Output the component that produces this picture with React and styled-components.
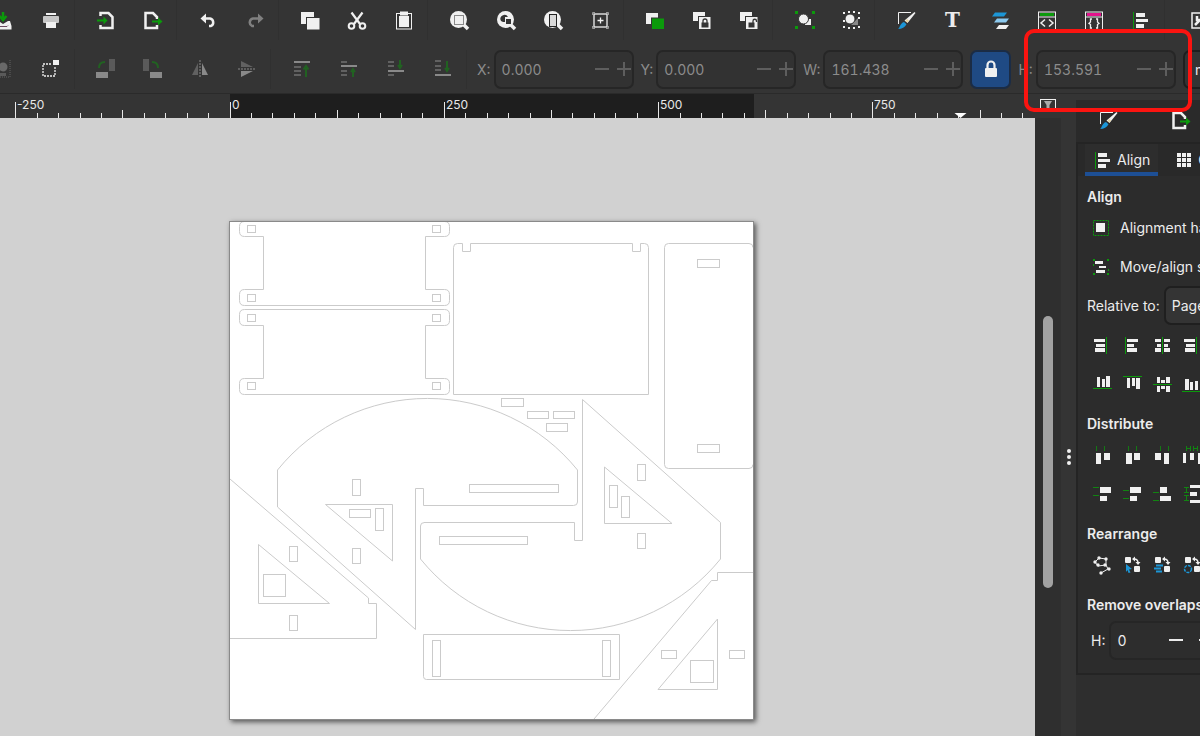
import React, { useState } from "react";
import styled, { createGlobalStyle } from "styled-components";

const W = "#f0f0f0";
const G = "#0b9a0b";
const B = "#1c96d6";
const D = "#343434";

const zoomGlass = (
  <>
    <circle cx="9.5" cy="9.5" r="8.5" fill={W} />
    <path d="M15 15l4 4" stroke={W} strokeWidth="3.5" />
  </>
);

const swapBase = (
  <>
    <rect x="3" y="2" width="6" height="6" rx="1" fill={W} />
    <rect x="12" y="11" width="6" height="6" rx="1" fill={W} />
    <path d="M12 4q4 0 4 4" stroke={W} strokeWidth="1.5" fill="none" />
    <path d="M13 1.5v5L10 4zM13.5 7h5L16 10z" fill={W} />
  </>
);

const bars = (list, fill = W) =>
  list.map(([x, y, width, height], i) => (
    <rect key={i} x={x} y={y} width={width} height={height} fill={fill} />
  ));

const ART = {
  save: (
    <>
      <path d="M9 2v6M5.5 6l3.5 4 3.5-4" stroke={G} strokeWidth="2.5" fill="none" />
      <path d="M2 12h4l3 2 5-3h2l1.5 5v3.5H0V15z" fill={W} />
      <path d="M4 16.5h9l1-1" stroke="#6b4a60" fill="none" />
    </>
  ),
  print: (
    <>
      <rect x="5" y="3" width="10" height="2" fill={W} />
      <rect x="2" y="6" width="16" height="7" rx="1" fill="#c6c6c6" />
      <rect x="5" y="12" width="10" height="6" fill={W} />
    </>
  ),
  importFile: (
    <>
      <path d="M4.5 6V3h8l4 4v11h-12v-3" stroke={W} strokeWidth="2.5" fill="none" />
      <path d="M1 10.5h8" stroke={G} strokeWidth="2" />
      <path d="M7.5 6.5l4 4-4 4z" fill={G} />
    </>
  ),
  exportFile: (
    <>
      <path d="M14 15v3H2.5V3h7.5l4 4v2" stroke={W} strokeWidth="2.5" fill="none" />
      <path d="M9 11.5h7" stroke={G} strokeWidth="2" />
      <path d="M15 7.5l4.5 4-4.5 4z" fill={G} />
    </>
  ),
  undo: (
    <>
      <path d="M6 8.5h6a4 4 0 0 1 1 7.5h-2" stroke={W} strokeWidth="2.5" fill="none" />
      <path d="M2.5 8.5L8 3.5v10z" fill={W} />
    </>
  ),
  redo: (
    <>
      <path d="M14 8.5H8a4 4 0 0 0-1 7.5h2" stroke="#808080" strokeWidth="2.5" fill="none" />
      <path d="M18.5 8.5L13 3.5v10z" fill="#808080" />
    </>
  ),
  copy: (
    <>
      <rect x="1" y="2" width="13" height="12" fill={W} />
      <rect x="6.5" y="7.5" width="13.5" height="12.5" fill={W} stroke={D} />
    </>
  ),
  cut: (
    <>
      <path d="M4.5 2.5L13 14M15.5 2.5L7 14" stroke={W} strokeWidth="2.2" />
      <circle cx="4.5" cy="16" r="2.8" fill="none" stroke={W} strokeWidth="2" />
      <circle cx="15.5" cy="16" r="2.8" fill="none" stroke={W} strokeWidth="2" />
    </>
  ),
  paste: (
    <>
      <rect x="2.5" y="3.5" width="15" height="15.5" fill="none" stroke={W} />
      <rect x="5" y="6" width="10" height="11" fill={W} />
      <rect x="6" y="1.5" width="8" height="4" fill={W} />
    </>
  ),
  zoomSelection: (
    <>
      {zoomGlass}
      <rect x="5.5" y="5.5" width="9" height="9" fill="none" stroke="#222" strokeDasharray="1 1" />
    </>
  ),
  zoomDrawing: (
    <>
      {zoomGlass}
      <path d="M5 11a4 4 0 1 1 7-4H9v5H7z" fill={D} />
      <rect x="9.5" y="8.5" width="6" height="6" fill={D} stroke={W} />
    </>
  ),
  zoomPage: (
    <>
      {zoomGlass}
      <rect x="6.5" y="4.5" width="7" height="12" fill="#d8d8d8" stroke="#222" />
    </>
  ),
  zoomCenter: (
    <>
      <rect x="4" y="4" width="13" height="13" fill="none" stroke={W} strokeWidth="1.3" />
      <path d="M7.5 10.5h6M10.5 7.5v6" stroke={W} strokeWidth="1.3" />
      <path d="M2.5 5V2.5H5M16 2.5h2.5V5M2.5 16v2.5H5M16 18.5h2.5V16" stroke="#999" fill="none" />
    </>
  ),
  duplicate: (
    <>
      <rect x="1" y="3" width="12" height="11" fill={W} />
      <rect x="6.5" y="8" width="13" height="11.5" fill={G} stroke={D} />
    </>
  ),
  clone: (
    <>
      <rect x="1" y="2" width="12" height="9" fill={W} />
      <rect x="6.5" y="6.5" width="12.5" height="13" fill={W} stroke={D} />
      <rect x="9.5" y="12.5" width="7" height="5" fill={D} />
      <path d="M11 13v-2a2 2 0 0 1 4 0v2" stroke={D} strokeWidth="1.3" fill="none" />
    </>
  ),
  unlink: (
    <>
      <rect x="1" y="2" width="12" height="9" fill={W} />
      <rect x="6.5" y="6.5" width="12.5" height="13" fill={W} stroke={D} />
      <rect x="9.5" y="12.5" width="6" height="5" fill={D} />
      <path d="M14 13v-2a1.5 1.5 0 0 1 3.5 0v1" stroke={D} strokeWidth="1.3" fill="none" />
    </>
  ),
  group: (
    <>
      {bars([[1, 1, 3, 3], [18, 1, 3, 3], [1, 16, 3, 3], [18, 16, 3, 3]], G)}
      <rect x="11" y="9" width="6" height="6" fill={W} />
      <circle cx="9.5" cy="9" r="5" fill={W} stroke={D} />
    </>
  ),
  ungroup: (
    <>
      <path d="M10 15h7V8z" fill="#888" />
      <circle cx="9" cy="9" r="5" fill={W} stroke={D} />
      {bars([[2, 2, 2, 2], [7, 1, 2, 2], [12, 1, 2, 2], [17, 2, 2, 2], [2, 16, 2, 2], [7, 17, 2, 2], [12, 17, 2, 2], [17, 16, 2, 2], [2, 10, 2, 2], [17, 7, 2, 2]])}
    </>
  ),
  pen: (
    <>
      <path d="M2.5 14V2.5H15" stroke={W} fill="none" />
      <path d="M18.5 2l1 1-8 10-3-2.5z" fill={W} />
      <path d="M11 9l2 1.5-1.5 2-2-1.5z" fill="#e9d7a0" />
      <path d="M8 12l2.5 2.2C9 17 6 19 2 19c2-1 2-6 6-7z" fill={B} />
    </>
  ),
  layers: (
    <>
      <path d="M5 2.5h12l-3 4H2z" fill={B} />
      <path d="M7 8.5h12l-3 4H4z" fill="#8cc9ee" />
      <path d="M9 15h10l-3 4H6z" fill={W} />
    </>
  ),
  xml: (
    <>
      <rect x="1.5" y="2" width="17" height="18" fill="none" stroke={W} />
      <rect x="3" y="3" width="14" height="3" fill={G} />
      <path d="M2 7h16" stroke={W} />
      <path d="M8 9.5l-4 3.5 4 3.5M12 9.5l4 3.5-4 3.5" stroke={W} strokeWidth="1.5" fill="none" />
    </>
  ),
  css: (
    <>
      <rect x="1.5" y="2" width="17" height="18" fill="none" stroke={W} />
      <rect x="3" y="3" width="14" height="3" fill="#e3128c" />
      <path d="M2 7h16" stroke={W} />
      <path d="M8 9H6.5v3L5 13.5l1.5 1V18H8M12 9h1.5v3l1.5 1.5-1.5 1V18H12" stroke={W} strokeWidth="1.3" fill="none" />
    </>
  ),
  align: (
    <>
      <path d="M2.5 2v17" stroke={G} />
      {bars([[5, 3, 9, 4], [5, 9, 12, 3], [5, 14, 8, 4]])}
    </>
  ),
  prefs: (
    <>
      <rect x="6" y="3" width="15" height="15" fill="none" stroke={W} strokeWidth="1.5" />
      <path d="M9 15l5-5M11 6v4h4" stroke={W} strokeWidth="2.5" fill="none" />
    </>
  ),
  select: (
    <>
      <circle cx="9" cy="8" r="4.5" fill="#aaa" />
      <path d="M3 1v17h13V1" stroke="#999" strokeDasharray="1 1" fill="none" />
      <path d="M5 14h7v3H5z" fill="#888" />
    </>
  ),
  scaleBox: (
    <>
      <rect x="2" y="5" width="12" height="12" fill="none" stroke={W} strokeWidth="1.3" strokeDasharray="2 1" />
      <rect x="11" y="0" width="8" height="7" fill={D} />
      <rect x="12" y="1" width="6" height="5" fill={W} />
    </>
  ),
  rotateLeft: (
    <>
      <rect x="13" y="0" width="6" height="12" fill="#888" />
      <rect x="0" y="13" width="12" height="6" fill={W} />
      <path d="M3 9q0-6 6-6" stroke={G} strokeWidth="2" fill="none" />
    </>
  ),
  rotateRight: (
    <>
      <rect x="0" y="0" width="6" height="12" fill="#888" />
      <rect x="7" y="13" width="12" height="6" fill={W} />
      <path d="M9 3q6 0 6 6" stroke={G} strokeWidth="2" fill="none" />
    </>
  ),
  flipH: (
    <>
      <path d="M8 4v12H2z" fill="#999" />
      <path d="M12 4v12h6z" fill={W} />
      <path d="M10 1v18" stroke={W} strokeDasharray="2 1" />
    </>
  ),
  flipV: (
    <>
      <path d="M4 8h12L4 2z" fill="#999" />
      <path d="M4 12h12L4 18z" fill={W} />
      <path d="M1 10h18" stroke={W} strokeDasharray="2 1" />
    </>
  ),
  raiseTop: (
    <>
      {bars([[2, 2, 16, 2]])}
      {bars([[2, 7, 7, 2], [2, 11, 7, 2], [2, 15, 7, 2]], "#999")}
      <path d="M14 18V9M11.5 10.5L14 7l2.5 3.5" stroke={G} strokeWidth="2" fill="none" />
    </>
  ),
  raise: (
    <>
      {bars([[2, 6, 16, 2]])}
      {bars([[2, 2, 6, 2], [2, 11, 6, 2], [2, 15, 6, 2]], "#999")}
      <path d="M14 18v-6M12 13l2-3 2 3" stroke={G} strokeWidth="2" fill="none" />
    </>
  ),
  lower: (
    <>
      {bars([[2, 11, 16, 2]])}
      {bars([[2, 2, 6, 2], [2, 6, 6, 2], [2, 15, 6, 2]], "#999")}
      <path d="M14 1v6M12 6l2 3 2-3" stroke={G} strokeWidth="2" fill="none" />
    </>
  ),
  lowerBottom: (
    <>
      {bars([[2, 15, 16, 2]])}
      {bars([[2, 1, 6, 2], [2, 6, 6, 2], [2, 10, 6, 2]], "#999")}
      <path d="M14 2v8M12 9l2 3 2-3" stroke={G} strokeWidth="2" fill="none" />
    </>
  ),
  lock: (
    <>
      <rect x="4" y="9" width="12" height="9" rx="1" fill={W} />
      <path d="M6.5 10V6a3.5 3.5 0 0 1 7 0v4" stroke={W} strokeWidth="2.2" fill="none" />
    </>
  ),
  guides: (
    <>
      <rect x="2.5" y="3.5" width="15" height="12" stroke={W} fill="none" />
      <path d="M6 5h8l-2.5 4v4h-3V9z" fill="#aaa" />
    </>
  ),
  grid: bars([3, 8, 13].flatMap((y) => [3, 8, 13].map((x) => [x, y, 4, 4]))),
  handles: (
    <>
      <rect x="2.5" y="2.5" width="15" height="15" fill="none" stroke={G} strokeDasharray="2 1" />
      <rect x="5" y="5" width="9" height="9" fill={W} />
    </>
  ),
  moveGroup: (
    <>
      {bars([[4, 4, 8, 3], [8, 9, 7, 2], [5, 13, 9, 3]])}
      {bars([[2, 2, 2, 2], [16, 2, 2, 2], [2, 16, 2, 2], [16, 16, 2, 2], [2, 7, 1, 2], [17, 12, 1, 2]], G)}
    </>
  ),
  alignRight: (
    <>
      {bars([[2, 4, 11, 3], [4, 9, 9, 3], [3, 13, 10, 4]])}
      <path d="M14.5 2v17" stroke={G} />
    </>
  ),
  alignLeft: (
    <>
      {bars([[5, 4, 11, 3], [5, 9, 7, 3], [5, 13, 10, 4]])}
      <path d="M3.5 2v17" stroke={G} />
    </>
  ),
  alignCenter: (
    <>
      {bars([[3, 4, 6, 3], [12, 4, 6, 3], [5, 9, 4, 3], [12, 9, 4, 3], [3, 13, 6, 4], [12, 13, 6, 4]])}
      <path d="M10.5 2v17" stroke={G} />
    </>
  ),
  alignBottom: (
    <>
      {bars([[5, 3, 3, 10], [10, 5, 3, 8], [14, 2, 4, 11]])}
      <path d="M1 14.5h19" stroke={G} />
    </>
  ),
  alignTop: (
    <>
      {bars([[5, 4, 3, 10], [10, 4, 3, 8], [14, 4, 4, 11]])}
      <path d="M1 2.5h19" stroke={G} />
    </>
  ),
  alignMiddle: (
    <>
      {bars([[5, 3, 3, 6], [9, 6, 4, 3], [14, 3, 4, 6], [5, 12, 3, 6], [9, 12, 4, 3], [14, 12, 4, 6]])}
      <path d="M1 10.5h19" stroke={G} />
    </>
  ),
  alignBase: (
    <>
      {bars([[3, 5, 4, 11], [8, 8, 3, 8], [13, 7, 3, 9]])}
      <path d="M0 17.5h20" stroke={G} />
    </>
  ),
  spreadLeft: (
    <>
      {bars([[4, 8, 5, 11], [12, 8, 6, 7]])}
      <path d="M4.5 1v5M12.5 1v5" stroke={G} opacity="0.7" />
    </>
  ),
  spreadCenter: (
    <>
      {bars([[4, 8, 6, 11], [12, 8, 6, 7]])}
      <path d="M6.5 1v5M14.5 1v5" stroke={G} opacity="0.7" />
    </>
  ),
  spreadRight: (
    <>
      {bars([[3, 8, 6, 7], [12, 8, 5, 11]])}
      <path d="M8.5 1v5M16.5 1v5" stroke={G} opacity="0.7" />
    </>
  ),
  gapsAcross: (
    <>
      {bars([[1, 8, 3, 10], [8, 8, 4, 7], [16, 8, 3, 11]])}
      <path d="M4 3.5h5M11 3.5h5M4.5 1v5M8.5 1v5M11.5 1v5M15.5 1v5" stroke={G} opacity="0.8" />
    </>
  ),
  spreadTop: (
    <>
      {bars([[8, 3, 11, 6], [8, 12, 7, 5]])}
      <path d="M1 3.5h6M1 11.5h6" stroke={G} opacity="0.8" />
    </>
  ),
  spreadMiddle: (
    <>
      {bars([[8, 3, 11, 6], [8, 12, 7, 5]])}
      <path d="M1 6.5h6M1 14.5h6" stroke={G} opacity="0.8" />
    </>
  ),
  spreadBottom: (
    <>
      {bars([[8, 3, 7, 6], [8, 12, 11, 5]])}
      <path d="M1 8.5h6M1 16.5h6" stroke={G} opacity="0.8" />
    </>
  ),
  gapsDown: (
    <>
      {bars([[8, 1, 12, 3], [8, 8, 7, 4], [8, 16, 12, 3]])}
      <path d="M4.5 4v5M4.5 11v5M2 3.5h5M2 8.5h5M2 11.5h5M2 16.5h5" stroke={G} opacity="0.8" />
    </>
  ),
  graph: (
    <>
      <path d="M7 3l7 1v6l-8 1-3-4zM14 10l2 4-7 4" stroke={W} fill="none" />
      {[[7, 3], [14, 4], [13, 10], [6, 10], [3, 7], [17, 14], [9, 18]].map(([x, y]) => (
        <circle key={`${x}-${y}`} cx={x} cy={y} r="1.7" fill={W} />
      ))}
    </>
  ),
  swapSelect: (
    <>
      {swapBase}
      <path d="M4 9l6 5-3 .5 1.5 3-2 .5-1-3-1.5 2z" fill={B} />
    </>
  ),
  swapStack: (
    <>
      {swapBase}
      <path d="M4 10.5h7M2 13.5h7M4 16.5h6" stroke={B} strokeWidth="2" />
    </>
  ),
  swapClock: (
    <>
      {swapBase}
      <circle cx="6" cy="14" r="3.5" stroke={B} strokeWidth="1.5" strokeDasharray="3 1" fill="none" />
    </>
  ),
};

const Icon = ({ name }) => (
  <svg width="20" height="20" viewBox="0 0 20 20" overflow="visible" aria-hidden="true">
    {ART[name]}
  </svg>
);

const COMMANDS = [
  ["save", "print"],
  ["importFile", "exportFile"],
  ["undo", "redo"],
  ["copy", "cut", "paste"],
  ["zoomSelection", "zoomDrawing", "zoomPage", "zoomCenter"],
  ["duplicate", "clone", "unlink"],
  ["group", "ungroup"],
  ["pen", "text", "layers", "xml", "css", "align"],
  ["prefs"],
];

const TOOL_GROUPS = [
  ["select", "scaleBox"],
  ["rotateLeft", "rotateRight", "flipH", "flipV"],
  ["raiseTop", "raise", "lower", "lowerBottom"],
];

// ten ticks cover 250 units
const tickX = (i) => Math.floor(230.1 + (i * 1500) / 70);

const Ruler = () => {
  const ticks = [];
  for (let i = -10; i <= 37; i++) {
    const top = i % 10 === 0 ? 8 : i % 5 === 0 ? 16 : 19;
    ticks.push(<path key={i} d={`M${tickX(i) + 0.5} ${top}V24`} stroke="#e8e8e8" />);
  }
  return (
    <RulerBar>
      <svg width="1035" height="24" aria-hidden="true">
        <rect x="230" width="524" height="24" fill="#1e1e1e" />
        {ticks}
        {[-250, 0, 250, 500, 750].map((n) => (
          <RulerText key={n} x={tickX(n / 25) + 2} y="15">
            {n}
          </RulerText>
        ))}
        <path d="M954.5 19h12l-6 5z" fill="#fff" />
      </svg>
    </RulerBar>
  );
};

const SpinInput = ({ label, id, value, bright }) => (
  <SpinBox $bright={bright}>
    <input id={id} defaultValue={value} />
    <button aria-label={`Decrease ${label}`}>
      <svg width="16" height="16"><path d="M1 8h14" /></svg>
    </button>
    <button aria-label={`Increase ${label}`}>
      <svg width="16" height="16"><path d="M1 8h14M8 1v14" /></svg>
    </button>
  </SpinBox>
);

const Spin = ({ label, id, value }) => (
  <Field>
    <label htmlFor={id}>{label}:</label>
    <SpinInput label={label} id={id} value={value} />
  </Field>
);

const SQUARES = [225.5, 294.5, 314.5, 382.5].flatMap((y) => [
  [247.5, y, 8, 7],
  [432.5, y, 8, 7],
]);

const SLOTS = [
  [697.5, 259.5, 22, 8],
  [697.5, 444.5, 22, 8],
  [501.5, 398.5, 22, 8],
  [527.5, 411.5, 21, 7],
  [553.5, 411.5, 21, 7],
  [546.5, 423.5, 21, 8],
  [469.5, 484.5, 89, 8],
  [439.5, 536.5, 88, 8],
  [349.5, 509.5, 21, 8],
  [375.5, 508.5, 8, 22],
  [352.5, 479.5, 8, 16],
  [352.5, 548.5, 8, 15],
  [263.5, 574.5, 22, 22],
  [289.5, 546.5, 8, 15],
  [289.5, 615.5, 8, 15],
  [609.5, 485.5, 8, 22],
  [621.5, 496.5, 8, 21],
  [637.5, 464.5, 8, 16],
  [637.5, 533.5, 8, 15],
  [690.5, 660.5, 23, 22],
  [661.5, 650.5, 15, 8],
  [729.5, 650.5, 15, 8],
  [432.5, 640.5, 8, 36],
  [602.5, 640.5, 8, 36],
];

const bracket = (a, b, c, d) =>
  `M244.5 ${a}Q239.5 ${a} 239.5 ${a + 5}V${b - 5}Q239.5 ${b} 244.5 ${b}H263.5V${c}H244.5Q239.5 ${c} 239.5 ${c + 5}V${d - 5}Q239.5 ${d} 244.5 ${d}H444.5Q449.5 ${d} 449.5 ${d - 5}V${c + 5}Q449.5 ${c} 444.5 ${c}H425.5V${b}H444.5Q449.5 ${b} 449.5 ${b - 5}V${a + 5}Q449.5 ${a} 444.5 ${a}Z`;

const CUTS = [
  bracket(221.5, 236.5, 289.5, 305.5),
  bracket(309.5, 325.5, 378.5, 394.5),
  "M453.5 394.5V247.5q0-4 4-4H462.5V251.5H470.5V243.5H632.5V251.5H640.5V243.5H644.5q4 0 4 4V394.5Z",
  "M753 247.5q0-4-4-4H668.5q-4 0-4 4V464.5q0 4 4 4H749q4 0 4-4",
  "M277.5 470A193 193 0 0 1 577.5 470V502q0 3.5-4 3.5H423.5V488.5H415.5V629.5L277.5 507Z",
  "M424 522.5H574.5V540.5H582.5V399.5L720.5 522.5V559A193 193 0 0 1 420.5 559V526q0-3.5 4-3.5",
  "M325.5 504.5H392.5V561Z",
  "M230 479L368.5 598V603.5H376.5V638.5H230",
  "M258.5 544.5V603.5H329.5Z",
  "M604.5 467V523.5H672Z",
  "M753 572.5H717.5V580.5H711.5L594 719",
  "M717.5 619V689.5H658Z",
  "M423.5 634.5H619.5V679.5H426.5q-3 0-3-3Z",
];

const Artboard = () => (
  <Page>
    <svg width="523" height="497" viewBox="230 222 523 497" fill="none" stroke="#cbcbcb">
      {CUTS.map((d) => (
        <path key={d} d={d} />
      ))}
      {[...SQUARES, ...SLOTS].map(([x, y, w, h]) => (
        <rect key={`${x},${y}`} x={x} y={y} width={w} height={h} />
      ))}
    </svg>
  </Page>
);

const IconRow = ({ names }) => (
  <Row $tight>
    {names.map((name, i) => (
      <DockButton key={i} aria-label={name}>
        <Icon name={name} />
      </DockButton>
    ))}
  </Row>
);

const App = () => {
  const [locked, setLocked] = useState(true);
  const [relative, setRelative] = useState("Page");

  return (
    <Window>
      <GlobalStyle />
      <Toolbars>
        <Bar>
          {COMMANDS.map((group) => (
            <Group key={group[0]}>
              {group.map((name) => (
                <ToolButton key={name} aria-label={name}>
                  {name === "text" ? <TextTool>T</TextTool> : <Icon name={name} />}
                </ToolButton>
              ))}
            </Group>
          ))}
        </Bar>
        <Bar $tall>
          {TOOL_GROUPS.map((group) => (
            <Group key={group[0]}>
              {group.map((name) => (
                <ToolButton key={name} aria-label={name} $dim={name !== "scaleBox"}>
                  <Icon name={name} />
                </ToolButton>
              ))}
            </Group>
          ))}
          <Fields>
            <Spin label="X" id="pos-x" value="0.000" />
            <Spin label="Y" id="pos-y" value="0.000" />
            <Spin label="W" id="size-w" value="161.438" />
            <LockButton
              aria-label="Lock ratio"
              aria-pressed={locked}
              $on={locked}
              onClick={() => setLocked(!locked)}
            >
              <Icon name="lock" />
            </LockButton>
            <Spin label="H" id="size-h" value="153.591" />
            <Select aria-label="Units" defaultValue="mm">
              <option>mm</option>
              <option>px</option>
            </Select>
          </Fields>
        </Bar>
        <Highlight />
      </Toolbars>
      <Main>
        <Editor>
          <Ruler />
          <Canvas>
            <Artboard />
          </Canvas>
        </Editor>
        <ScrollColumn>
          <GuideButton aria-label="Guides">
            <Icon name="guides" />
          </GuideButton>
          <Thumb />
        </ScrollColumn>
        <Handle>
          <i />
          <i />
          <i />
        </Handle>
        <Dock>
          <DockTabs>
            <DockButton $wide aria-label="Fill and stroke">
              <Icon name="pen" />
            </DockButton>
            <DockButton $wide aria-label="Export">
              <Icon name="exportFile" />
            </DockButton>
          </DockTabs>
          <Panel>
            <Tabs>
              <Tab $active>
                <Icon name="align" />
                Align
              </Tab>
              <Tab>
                <Icon name="grid" />
                Grid
              </Tab>
            </Tabs>
            <Heading>Align</Heading>
            <Row>
              <Toggle>
                <Icon name="handles" />
                Alignment handles
              </Toggle>
            </Row>
            <Row>
              <Toggle>
                <Icon name="moveGroup" />
                Move/align selection as group
              </Toggle>
            </Row>
            <Row>
              <label htmlFor="relative">Relative to:</label>
              <Select
                id="relative"
                $near
                value={relative}
                onChange={(e) => setRelative(e.target.value)}
              >
                <option>Page</option>
                <option>Drawing</option>
                <option>Selection Area</option>
              </Select>
            </Row>
            <IconRow names={["alignRight", "alignLeft", "alignCenter", "alignRight"]} />
            <IconRow names={["alignBottom", "alignTop", "alignMiddle", "alignBase"]} />
            <Heading>Distribute</Heading>
            <IconRow names={["spreadLeft", "spreadCenter", "spreadRight", "gapsAcross"]} />
            <IconRow names={["spreadTop", "spreadMiddle", "spreadBottom", "gapsDown"]} />
            <Heading>Rearrange</Heading>
            <IconRow names={["graph", "swapSelect", "swapStack", "swapClock"]} />
            <Heading>Remove overlaps</Heading>
            <Row $tall>
              <label htmlFor="gap-h">H:</label>
              <SpinInput label="gap" id="gap-h" value="0" bright />
            </Row>
          </Panel>
        </Dock>
      </Main>
    </Window>
  );
};

const GlobalStyle = createGlobalStyle`
  * {
    box-sizing: border-box;
  }
  body {
    margin: 0;
    background: #343434;
    color: #ececec;
    font-family: Inter, "Liberation Sans", sans-serif;
    font-size: 14px;
  }
  button, input, select {
    font: inherit;
    color: inherit;
    background: none;
    border: none;
    padding: 0;
    margin: 0;
  }
  svg {
    display: block;
    flex: none;
  }
`;

const Window = styled.div`
  display: flex;
  flex-direction: column;
  height: 100vh;
  overflow: hidden;
`;

const Toolbars = styled.div`
  position: relative;
  flex: none;
  border-bottom: 1px solid #2a2a2a;
`;

const Bar = styled.div`
  display: flex;
  align-items: center;
  height: ${(p) => (p.$tall ? "53px" : "40px")};
  padding-top: ${(p) => (p.$tall ? "5px" : "0")};
  margin-left: -20px;
  overflow: hidden;
`;

const Group = styled.div`
  display: flex;
  flex: none;
  & + & {
    padding-left: 7px;
    border-left: 1px solid #303030;
  }
`;

const ToolButton = styled.button`
  display: flex;
  align-items: center;
  justify-content: center;
  width: 47px;
  height: 40px;
  opacity: ${(p) => (p.$dim ? 0.45 : 1)};
`;

const TextTool = styled.span`
  font-family: "DejaVu Serif", serif;
  font-weight: bold;
  font-size: 20px;
  line-height: 20px;
`;

const Fields = styled.div`
  display: flex;
  align-items: center;
  gap: 7px;
  padding-left: 10px;
  border-left: 1px solid #303030;
`;

const Field = styled.div`
  display: flex;
  align-items: center;
  gap: 3px;
  color: #8c8c8c;
`;

const SpinBox = styled.div`
  display: flex;
  flex: none;
  align-items: center;
  width: ${(p) => (p.$bright ? "114px" : "140px")};
  height: 39px;
  border: 2px solid #262626;
  border-radius: 7px;
  color: ${(p) => (p.$bright ? "#ececec" : "#8c8c8c")};
  background: ${(p) => (p.$bright ? "#2d2d2d" : "#323232")};
  input {
    flex: 1;
    min-width: 0;
    padding-left: 6px;
    font-variant-numeric: tabular-nums;
    outline: none;
  }
  button {
    display: flex;
    justify-content: ${(p) => (p.$bright ? "center" : "flex-end")};
    width: ${(p) => (p.$bright ? "30px" : "22px")};
  }
  path {
    stroke: ${(p) => (p.$bright ? "#ececec" : "#5e5e5e")};
    stroke-width: 2;
  }
`;

const LockButton = styled.button`
  display: flex;
  align-items: center;
  justify-content: center;
  width: 41px;
  height: 39px;
  border: 2px solid #1b2c45;
  border-radius: 7px;
  background: ${(p) => (p.$on ? "#1f4a84" : "#323232")};
`;

const Select = styled.select`
  flex: none;
  width: 120px;
  height: 39px;
  padding-left: ${(p) => (p.$near ? "6px" : "10px")};
  appearance: none;
  border: 2px solid #1f1f1f;
  border-radius: 7px;
  background: #343434;
  color: #ececec;
`;

const Highlight = styled.div`
  position: absolute;
  top: 29px;
  right: 8px;
  width: 168px;
  height: 83px;
  border: 4px solid #fb1410;
  border-radius: 10px;
  pointer-events: none;
  z-index: 2;
`;

const Main = styled.div`
  display: flex;
  flex: 1;
  min-height: 0;
`;

const Editor = styled.div`
  display: flex;
  flex-direction: column;
  flex: 1;
  min-width: 0;
`;

const RulerBar = styled.div`
  flex: none;
  height: 24px;
  overflow: hidden;
`;

const RulerText = styled.text`
  font-size: 12px;
  fill: #e8e8e8;
`;

const Canvas = styled.div`
  position: relative;
  flex: 1;
  background: #d1d1d1;
  overflow: hidden;
`;

const Page = styled.div`
  position: absolute;
  left: 230px;
  top: 104px;
  background: #fff;
  outline: 1px solid #8a8a8a;
  box-shadow: 2px 2px 5px 1px rgba(0, 0, 0, 0.6);
`;

const ScrollColumn = styled.div`
  display: flex;
  flex-direction: column;
  align-items: center;
  width: 26px;
  background: #2f2f2f;
`;

const GuideButton = styled.button`
  display: flex;
  align-items: center;
  justify-content: center;
  width: 26px;
  height: 24px;
  background: #343434;
`;

const Thumb = styled.div`
  width: 10px;
  height: 272px;
  margin-top: 198px;
  border-radius: 5px;
  background: #a2a2a2;
`;

const Handle = styled.div`
  display: flex;
  flex-direction: column;
  align-items: center;
  justify-content: center;
  gap: 2px;
  width: 15px;
  padding-top: 84px;
  i {
    width: 4px;
    height: 4px;
    border-radius: 50%;
    background: #f0f0f0;
  }
`;

const Dock = styled.div`
  flex: none;
  width: 124px;
  margin-top: 6px;
  overflow: hidden;
  white-space: nowrap;
  background: #2e2e2e;
`;

const DockTabs = styled.div`
  display: flex;
  gap: 9px;
  height: 42px;
  padding-bottom: 2px;
  background: #2a2a2a;
`;

const Panel = styled.div`
  padding: 0 0 9px 9px;
  border: 2px solid #242424;
  border-right: none;
  background: #2c2c2c;
`;

const Tabs = styled.div`
  display: flex;
  gap: 8px;
  height: 32px;
  margin-left: -9px;
  padding-left: 7px;
  background: #292929;
`;

const Tab = styled.button`
  display: flex;
  flex: none;
  align-items: center;
  gap: 4px;
  padding: 3px 8px 0;
  border-bottom: 4px solid ${(p) => (p.$active ? "#1d4f95" : "transparent")};
  background: ${(p) => (p.$active ? "#2d2d2d" : "transparent")};
`;

const Heading = styled.h3`
  margin: 0;
  padding-top: 10px;
  font-size: 14px;
  font-weight: 600;
  line-height: 22px;
`;

const Row = styled.div`
  display: flex;
  align-items: center;
  gap: ${(p) => (p.$tight ? "0" : "4px")};
  height: ${(p) => (p.$tall ? "48px" : "39px")};
  padding-left: ${(p) => (p.$tall ? "4px" : "0")};
`;

const DockButton = styled.button`
  display: flex;
  flex: none;
  align-items: center;
  justify-content: center;
  width: ${(p) => (p.$wide ? "64px" : "30px")};
`;

const Toggle = styled.button`
  display: flex;
  align-items: center;
  gap: 9px;
  padding-left: 4px;
`;

export default App;
